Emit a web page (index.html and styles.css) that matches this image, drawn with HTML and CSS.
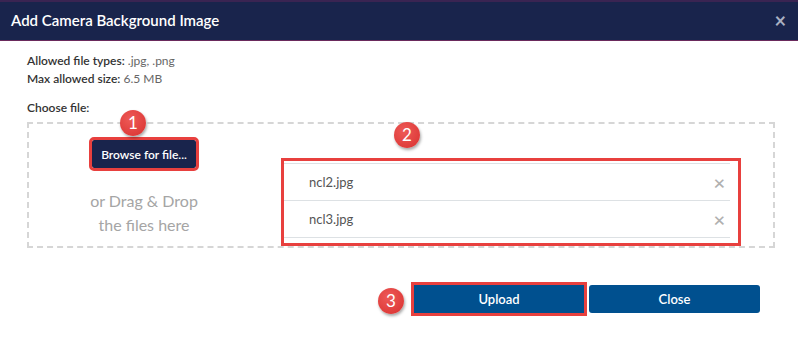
FILE: index.html
```html
<!DOCTYPE html>
<html lang="en">
<head>
	<meta charset="UTF-8">
	<title>Add Camera Background Image</title>
	<link rel="stylesheet" href="styles.css">
</head>
<body>
	<div class="modal">
		<div class="modal-head">
			<h2>Add Camera Background Image</h2>
			<span class="close-x">&times;</span>
		</div>
		<div class="modal-body">
			<p class="info"><b>Allowed file types:</b> .jpg, .png</p>
			<p class="info"><b>Max allowed size:</b> 6.5 MB</p>
			<p class="label">Choose file:</p>
			<div class="drop">
				<div class="drop-left">
					<button class="browse mark">Browse for file...<span class="badge b1">1</span></button>
					<p class="hint">or Drag &amp; Drop<br>the files here</p>
				</div>
				<div class="files mark-box">
					<span class="badge b2">2</span>
					<ul>
						<li><span>ncl2.jpg</span><i>&times;</i></li>
						<li><span>ncl3.jpg</span><i>&times;</i></li>
					</ul>
				</div>
			</div>
		</div>
		<div class="modal-foot">
			<button class="btn mark">Upload<span class="badge b3">3</span></button>
			<button class="btn btn-close">Close</button>
		</div>
	</div>
</body>
</html>
```

FILE: styles.css
```css
*{
	margin: 0;
	padding: 0;
	box-sizing: border-box;
}
body{
	background: #fff;
	font-family: Lato, "Open Sans", sans-serif;
	color: #333;
}
ul{
	list-style: none;
}
.modal{
	width: 798px;
	height: 340px;
}
.modal-head{
	height: 41px;
	border-top: 2px solid #3a2452;
	border-bottom: 1px solid #6a2a5c;
	background: #19244c;
	display: flex;
	align-items: center;
	justify-content: space-between;
	padding: 0 12px 0 11px;
}
.modal-head h2{
	font-size: 15px;
	font-weight: 600;
	color: #fff;
	margin-top: -2px;
}
.close-x{
	color: #a9b0c2;
	font-size: 20px;
	font-weight: bold;
	line-height: 1;
	margin-top: -2px;
}
.modal-body{
	padding: 11px 23px 0 27px;
}
.info{
	font-size: 12px;
	line-height: 18px;
	color: #666;
}
.info b{
	font-weight: 600;
	color: #333;
}
.label{
	font-size: 12px;
	line-height: 18px;
	font-weight: 600;
	color: #333;
	margin-top: 11px;
}
.drop{
	margin-top: 5px;
	height: 126px;
	border: 2px dashed #d6d6d6;
	display: flex;
	align-items: flex-start;
}
.drop-left{
	width: 230px;
	display: flex;
	flex-direction: column;
	align-items: center;
	padding-top: 16px;
}
.browse{
	position: relative;
	width: 104px;
	height: 28px;
	background: #19244c;
	color: #fff;
	border: none;
	border-radius: 2px;
	font-family: inherit;
	font-size: 12px;
	font-weight: 600;
}
.mark{
	outline: 3px solid #e8403e;
	outline-offset: 0;
}
.hint{
	margin-top: 21px;
	font-size: 16px;
	line-height: 24px;
	color: #a5a5a5;
	text-align: center;
}
.files{
	position: relative;
	margin: 34px 0 0 22px;
	width: 460px;
	height: 88px;
	border: 3px solid #e8403e;
	padding: 2px 8px 0 0;
}
.files li{
	height: 37px;
	border-top: 1px solid #dde1e4;
	display: flex;
	align-items: center;
	justify-content: space-between;
	padding: 0 5px 0 25px;
	font-size: 13px;
	color: #555;
}
.files li:last-child{
	border-bottom: 1px solid #dde1e4;
	height: 38px;
}
.files i{
	font-style: normal;
	font-size: 20px;
	font-weight: 600;
	color: #b0b0b0;
}
.modal-foot{
	display: flex;
	justify-content: flex-end;
	gap: 5px;
	padding: 37px 38px 0 0;
}
.btn{
	position: relative;
	width: 170px;
	height: 28px;
	background: #00508f;
	color: #fff;
	border: none;
	border-radius: 3px;
	font-family: inherit;
	font-size: 13px;
	font-weight: 600;
}
.btn.mark{
	border-radius: 0;
}
.btn-close{
	width: 171px;
}
.badge{
	position: absolute;
	width: 26px;
	height: 26px;
	border-radius: 50%;
	background: radial-gradient(circle at 40% 35%, #ee5a57, #d8302f);
	box-shadow: 1px 2px 3px rgba(0, 0, 0, 0.35);
	color: #fff;
	font-size: 17px;
	font-weight: normal;
	line-height: 26px;
	text-align: center;
}
.b1{
	left: 28px;
	top: -30px;
}
.b2{
	left: 110px;
	top: -39px;
}
.b3{
	left: -36px;
	top: 3px;
}
```
